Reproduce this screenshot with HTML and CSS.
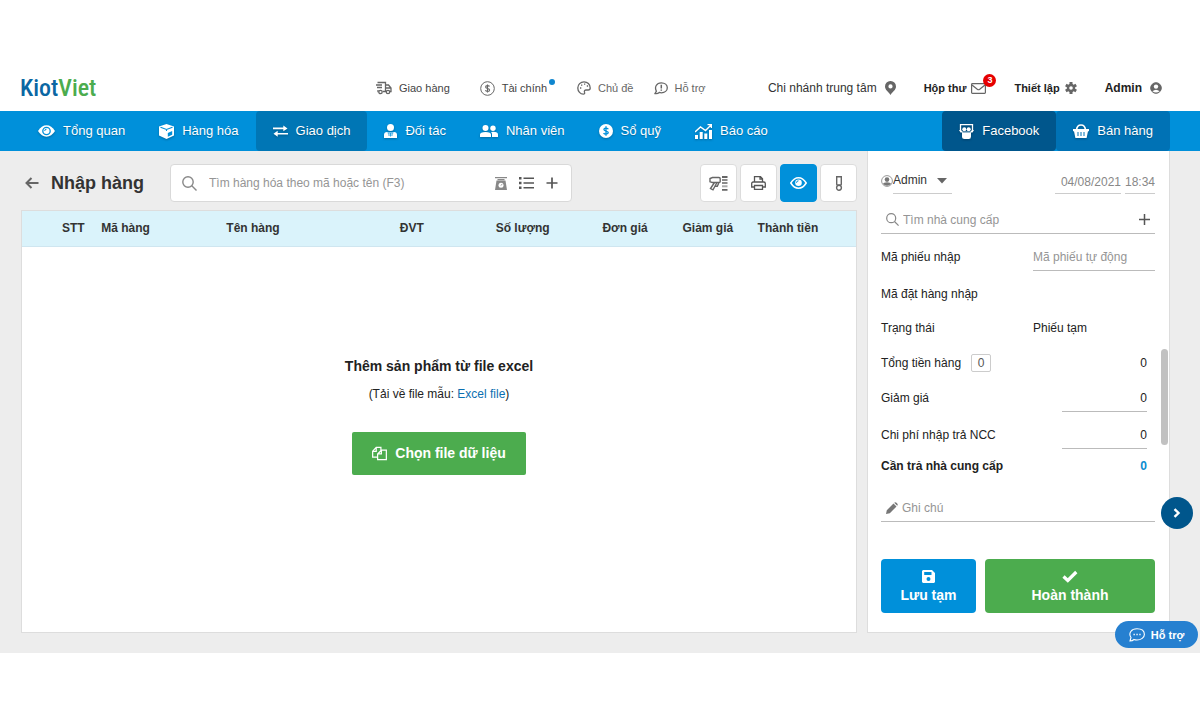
FILE: index.html
```html
<!DOCTYPE html>
<html lang="vi">
<head>
<meta charset="utf-8">
<meta name="viewport" content="width=device-width, initial-scale=1">
<title>KiotViet - Nhập hàng</title>
<link rel="stylesheet" href="styles.css">
</head>
<body>
<header class="topbar">
  <a class="logo" href="#"><span class="logo-kiot">Kiot</span><span class="logo-viet">Viet</span></a>
  <nav class="top-links">
    <a class="top-link strong" href="#"><svg width="16" height="14" viewBox="0 0 16 14" fill="none" stroke="#666" stroke-width="1.3"><path d="M1.500 1.500h8v9H7M9.500 4h3l2.500 3v3.500h-1M0 4h6M1 6.500h5M2 9v1.500h.5M9.500 10.500h1M10 7h5"/><circle cx="4.500" cy="11" r="1.700"/><circle cx="12" cy="11" r="1.700"/></svg>Giao hàng</a>
    <a class="top-link strong finance" href="#"><svg width="15" height="15" viewBox="0 0 15 15" fill="none" stroke="#666"><circle cx="7.500" cy="7.500" r="6.800"/><path d="M9.500 5.500C9 4.300 5.600 4.200 5.600 6c0 1.900 4 1 4 3 0 1.900-3.600 1.800-4.200.3M7.500 3.400v8.200" stroke-width="1.100"/></svg>Tài chính<i class="dot"></i></a>
    <a class="top-link theme" href="#"><svg width="14" height="14" viewBox="0 0 14 14" fill="none" stroke="currentColor" stroke-width="1.300"><path d="M7 .8C3.500.800.800 3.500.800 7s2.700 6.200 5.400 6.200c1.600 0 1.700-1 1.300-1.900C7 10 7.800 9 9 9h2.200c1.300 0 2-.8 2-2C13.200 3.300 10.500.800 7 .800z"/><path d="M3 7h1.300M4 4.200h1.300M7 3.200h1.300M9.800 5h1.300"/></svg>Chủ đề</a>
    <a class="top-link help" href="#"><svg width="14" height="13" viewBox="0 0 14 13" fill="none" stroke="currentColor" stroke-width="1.300"><path d="M1 11.500l1.400-2.300C.2 5.200 2.500.800 7.300.800c3.500 0 6 2.200 6 5s-2.500 5-6 5q-1 0-2-.4Q3.500 12 1 11.500z"/><path d="M7.300 2.800v3.600M7.300 7.500v1.300" stroke-width="1.500"/></svg>Hỗ trợ</a>
  </nav>
  <nav class="account-links">
    <a class="account-link branch" href="#">Chi nhánh trung tâm<svg width="11" height="14" viewBox="0 0 11 14" fill="#666"><path fill-rule="evenodd" d="M5.500 0A5.400 5.400 0 0 0 0 5.400C0 9 3.500 10.500 5.500 14 7.500 10.500 11 9 11 5.400A5.400 5.400 0 0 0 5.500 0zm0 3.300a2.100 2.100 0 1 1 0 4.200 2.100 2.100 0 0 1 0-4.200z"/></svg></a>
    <a class="account-link small inbox" href="#">Hộp thư<span class="mail"><svg width="15" height="11" viewBox="0 0 15 11" fill="none" stroke="#666" stroke-width="1.200"><rect x=".6" y=".6" width="13.800" height="9.800" rx=".8"/><path d="M1 2l5.300 4.300q1.200.9 2.400 0L14 2"/></svg><b class="badge">3</b></span></a>
    <a class="account-link small" href="#">Thiết lập<svg width="12" height="12" viewBox="0 0 12 12"><g stroke="#666" stroke-width="3"><path d="M6 0v12M.8 3l10.400 6M11.200 3L.800 9"/></g><circle cx="6" cy="6" r="4.200" fill="#666"/><circle cx="6" cy="6" r="1.800" fill="#fff"/></svg></a>
    <a class="account-link" href="#">Admin<svg width="12" height="12" viewBox="0 0 12 12"><circle cx="6" cy="6" r="5.300" fill="#666" stroke="#666"/><circle cx="6" cy="4.600" r="2.200" fill="#fff"/><path d="M2.400 9.200Q6 6.200 9.600 9.200 6 12 2.400 9.200z" fill="#fff"/></svg></a>
  </nav>
</header>

<nav class="mainnav">
  <a class="nav-item" href="#"><svg width="17" height="12" viewBox="0 0 17 12"><path d="M0 6Q3.500.300 8.500.300T17 6Q13.500 11.700 8.500 11.700T0 6z" fill="#fff"/><circle cx="8.500" cy="6" r="3.700" fill="none" stroke="#0090da" stroke-width="1.300"/><path d="M6.700 6a1.800 1.800 0 0 1 1.800-1.800" stroke="#0090da" fill="none"/></svg>Tổng quan</a>
  <a class="nav-item" href="#"><svg width="15" height="15" viewBox="0 0 15 15"><path d="M7.500 0L15 2.500v9L7.500 15 0 11.500v-9z" fill="#fff"/><path d="M1.500 3.300L7.500 5.500l6-2.200M7.500 5.500V7" stroke="#0090da" fill="none" stroke-width="1.100"/><path d="M8.800 9l4.400-2v3.800l-4.400 2z" fill="#0090da"/></svg>Hàng hóa</a>
  <a class="nav-item active" href="#"><svg width="15" height="12" viewBox="0 0 16 12"><path d="M0 2.300h11V0l4.500 3.200L11 6.300V4H0zM16 8H5V5.700L.5 8.900 5 12V9.700h11z" fill="#fff"/></svg>Giao dịch</a>
  <a class="nav-item" href="#"><svg width="13" height="14" viewBox="0 0 13 14"><circle cx="6.500" cy="3.500" r="3.500" fill="#fff"/><path d="M0 14v-3q0-3 3-3h7q3 0 3 3v3z" fill="#fff"/><path d="M3.500 8.800h6M6.500 9v3.500M4.800 9l.3 3M8.200 9l-.3 3" stroke="#0090da" stroke-width=".8"/></svg>Đối tác</a>
  <a class="nav-item" href="#"><svg width="18" height="12" viewBox="0 0 18 12" fill="#fff"><circle cx="5.500" cy="3" r="3"/><circle cx="13" cy="3.200" r="2.700"/><path d="M0 12V9.500Q0 7 5.500 7T11 9.500V12zM12 12V9q0-1.200-1-2Q18 6.300 18 9.500V12z"/></svg>Nhân viên</a>
  <a class="nav-item" href="#"><svg width="14" height="14" viewBox="0 0 14 14"><circle cx="7" cy="7" r="7" fill="#fff"/><path d="M9.300 5.200C8.700 3.600 4.900 3.700 4.900 5.500c0 2 4.400 1.100 4.400 3.100 0 1.900-4 1.900-4.700.3M7 2.300v9.400" stroke="#0090da" stroke-width="1.300" fill="none"/></svg>Sổ quỹ</a>
  <a class="nav-item" href="#"><svg width="17" height="15" viewBox="0 0 17 15"><path d="M0 11h3v4H0zM4.700 8h3v7h-3zM9.300 9.500h3V15h-3zM14 6h3v9h-3z" fill="#fff"/><path d="M0 8l5.500-5 5 3.500L16 1M12.500.600H16.400V4" fill="none" stroke="#fff" stroke-width="1.400"/></svg>Báo cáo</a>
  <div class="nav-actions">
    <a class="nav-item facebook" href="#"><svg width="15" height="15" viewBox="0 0 15 15"><path d="M1.500 6V.7h12V6" fill="none" stroke="#fff" stroke-width="1.300"/><path d="M0 6h2l1.500 1.500h8L13 6h2l-1.500 2.500H12v4Q12 15 9.800 15H5.500Q3 15 3 12.500v-4H1.500z" fill="#fff"/><circle cx="5.300" cy="5.200" r="2" fill="#fff"/><circle cx="9.700" cy="5.200" r="2" fill="#fff"/><path d="M3.500 8h8" stroke="#00568c" stroke-width=".8"/></svg>Facebook</a>
    <a class="nav-item sell" href="#"><svg width="16" height="14" viewBox="0 0 16 14"><path d="M3.500 6Q4 1 8 1t4.500 5" fill="none" stroke="#fff" stroke-width="1.700"/><path d="M0 5h16v2.200h-1L13.600 14H2.400L1 7.200H0z" fill="#fff"/><path d="M5 8v4M8 8v4M11 8v4" stroke="#0072b5"/></svg>Bán hàng</a>
  </div>
</nav>

<main class="workspace">
  <section class="purchase">
    <div class="toolbar">
      <a class="back" href="#" aria-label="Quay lại"><svg width="14" height="12" viewBox="0 0 14 12" fill="none" stroke="#666" stroke-width="2"><path d="M13.500 6H2M6.500 1l-5 5 5 5"/></svg></a>
      <h1 class="title">Nhập hàng</h1>
      <div class="search">
        <svg width="15" height="15" viewBox="0 0 15 15" fill="none" stroke="#888" stroke-width="1.400"><circle cx="6" cy="6" r="5.200"/><path d="M9.800 9.800l4.700 4.700"/></svg>
        <input class="search-input" type="text" aria-label="Tìm hàng hóa" placeholder="Tìm hàng hóa theo mã hoặc tên (F3)">
        <button class="icon-btn" type="button" aria-label="Cân"><svg width="12" height="13" viewBox="0 0 12 13"><path d="M0 .7h12M2.500 2.700h7" stroke="#888" stroke-width="1.300"/><path d="M1.500 3.500h9L12 13H0z" fill="#888"/><circle cx="6" cy="8.300" r="2.500" fill="#fff"/><path d="M6 8.500l1-1.300" stroke="#888"/></svg></button>
        <button class="icon-btn" type="button" aria-label="Danh sách"><svg width="15" height="12" viewBox="0 0 15 12" stroke="#555" stroke-width="1.600"><path d="M4.500 1.200H15M4.500 6H15M4.500 10.800H15"/><path d="M0 1.200h2.500M0 6h2.500M0 10.800h2.500" stroke-width="2.400"/></svg></button>
        <button class="icon-btn" type="button" aria-label="Thêm"><svg width="12" height="12" viewBox="0 0 12 12" stroke="#555" stroke-width="1.700"><path d="M6 .5v11M.5 6h11"/></svg></button>
      </div>
      <div class="tools">
        <button class="tool" type="button" aria-label="Quét mã vạch"><svg width="19" height="15" viewBox="0 0 19 15" fill="none" stroke="#666" stroke-width="1.400"><path d="M3.500 1.500H10q1.200 0 1.200 1.200v2.800q0 1-1.200 1H3.500L1 5.800V2.500zM5.500 6.500L1.500 12.500l2.500 1.300L8 6.500M6.500 10.300h1.800l1.700-3.800"/><path d="M13 1h5.500M13 13.800h5.500" stroke-width="1.800"/><path d="M13 4h5.500M13 7h5.500" stroke-width="1.500"/><path d="M13 10.300h5.500" stroke="#aaa" stroke-width="2"/></svg></button>
        <button class="tool" type="button" aria-label="In"><svg width="15" height="14" viewBox="0 0 15 14" fill="none" stroke="#555" stroke-width="1.300"><path d="M3.500 6V.7h6l2 2V6M3.500 11H.7V7.500Q.7 6 2.200 6h10.600q1.500 0 1.500 1.500V11h-2.800M3.500 9.500h8v3.800h-8zM9 1v2.200h2.500"/></svg></button>
        <button class="tool on" type="button" aria-label="Hiển thị"><svg width="17" height="12" viewBox="0 0 17 12" fill="none" stroke="#fff" stroke-width="1.500"><path d="M.8 6Q4 .8 8.500.800T16.200 6Q13 11.200 8.500 11.200T.8 6z"/><circle cx="8.500" cy="5.700" r="3.300" fill="#fff" stroke="none"/><path d="M6.500 5.800a2 2 0 0 1 2-2" stroke="#0090da" stroke-width="1"/></svg></button>
        <button class="tool" type="button" aria-label="Ghi chú"><svg width="8" height="15" viewBox="0 0 8 15" fill="none" stroke="#666" stroke-width="1.400"><path d="M1.700.8h4.600v7.400q0 .8-.8.800h-3q-.8 0-.8-.8z"/><circle cx="4" cy="11.800" r="2.400"/></svg></button>
      </div>
    </div>
    <div class="sheet">
      <table class="items">
        <colgroup><col class="c-no"><col class="c-code"><col class="c-name"><col class="c-unit"><col class="c-qty"><col class="c-price"><col class="c-disc"><col class="c-total"></colgroup>
        <thead><tr><th class="first">STT</th><th>Mã hàng</th><th>Tên hàng</th><th>ĐVT</th><th>Số lượng</th><th>Đơn giá</th><th>Giảm giá</th><th>Thành tiền</th></tr></thead>
      </table>
      <div class="empty">
        <h2 class="empty-title">Thêm sản phẩm từ file excel</h2>
        <p class="empty-note">(Tải về file mẫu: <a class="file-link" href="#">Excel file</a>)</p>
        <button class="choose" type="button"><svg width="15" height="15" viewBox="0 0 16 15" fill="none" stroke="#fff" stroke-width="1.300"><path d="M6 11.400H.7V5L4.500.900h5V4M4.500 1v4.200H.700M10 4h5.300v10H6V8zM10 4v4H6"/></svg>Chọn file dữ liệu</button>
      </div>
    </div>
  </section>

  <aside class="panel">
    <div class="meta">
      <label class="person"><svg width="12" height="12" viewBox="0 0 12 12"><circle cx="6" cy="6" r="5.400" fill="none" stroke="#999"/><circle cx="6" cy="4.600" r="2.300" fill="#777"/><path d="M2 9Q2.500 7.200 6 7.200T10 9Q6 12.500 2 9z" fill="#777"/></svg>
        <span class="picker"><select class="picker-select" aria-label="Người nhập"><option>Admin</option></select><svg class="caret" width="10" height="6" viewBox="0 0 10 6"><path d="M0 0h10L5 5.500z" fill="#666"/></svg></span></label>
      <div class="when"><input class="date" type="text" aria-label="Ngày nhập" value="04/08/2021"><input class="time" type="text" aria-label="Giờ nhập" value="18:34"></div>
    </div>
    <div class="line supplier">
      <svg width="13" height="13" viewBox="0 0 15 15" fill="none" stroke="#888" stroke-width="1.400"><circle cx="6" cy="6" r="5.200"/><path d="M9.800 9.800l4.700 4.700"/></svg>
      <input class="line-input" type="text" aria-label="Nhà cung cấp" placeholder="Tìm nhà cung cấp">
      <button class="icon-btn add" type="button" aria-label="Thêm nhà cung cấp"><svg width="11" height="11" viewBox="0 0 11 11" stroke="#555" stroke-width="1.500"><path d="M5.500 0v11M0 5.500h11"/></svg></button>
    </div>
    <div class="row code"><label for="code">Mã phiếu nhập</label><input id="code" class="field code-field" type="text" placeholder="Mã phiếu tự động"></div>
    <div class="row order"><span>Mã đặt hàng nhập</span></div>
    <div class="row status"><span>Trạng thái</span><span class="state">Phiếu tạm</span></div>
    <div class="row"><span>Tổng tiền hàng<span class="count">0</span></span><span class="amount">0</span></div>
    <div class="row"><label for="discount">Giảm giá</label><input id="discount" class="field money" type="text" value="0"></div>
    <div class="row cost"><label for="cost">Chi phí nhập trả NCC</label><input id="cost" class="field money" type="text" value="0"></div>
    <div class="row due"><span>Cần trả nhà cung cấp</span><span class="amount">0</span></div>
    <div class="line note">
      <svg width="12" height="12" viewBox="0 0 12 12" fill="#777"><path d="M0 12l.8-3.800L7.500 1.500l3 3L3.800 11.200zM8.200.800q1-1 2.300 0l.7.700q1 1.200 0 2.300z"/></svg>
      <input class="line-input" type="text" aria-label="Ghi chú" placeholder="Ghi chú">
    </div>
    <div class="actions">
      <button class="action draft" type="button"><svg width="13" height="13" viewBox="0 0 13 13"><path fill-rule="evenodd" d="M1 0h9l3 3v9l-1 1H1l-1-1V1zM2.200 2v3h7.300V2zM6.500 7a2 2 0 1 0 0 4 2 2 0 0 0 0-4z" fill="#fff"/></svg>Lưu tạm</button>
      <button class="action done" type="button"><svg width="16" height="13" viewBox="0 0 16 13"><path d="M1.500 6.500l4.300 4L14.300 2" fill="none" stroke="#fff" stroke-width="3.200"/></svg>Hoàn thành</button>
    </div>
    <i class="thumb"></i>
    <button class="expand" type="button" aria-label="Mở rộng"><svg width="8" height="10" viewBox="0 0 8 10"><path d="M1.500 1.200L5.500 5l-4 3.800" fill="none" stroke="#fff" stroke-width="2.400"/></svg></button>
  </aside>
  <button class="chat" type="button"><svg width="16" height="14" viewBox="0 0 16 14" fill="none" stroke="#fff" stroke-width="1.100"><path d="M1 13l1-3.500C-1 5 2.500.800 8 .800S15.400 3.500 15.400 6.500 12 12 8 12q-1.600 0-3-.5Q3.500 13 1 13z"/><path d="M4.500 6.500h1.300M7.400 6.500h1.300M10.300 6.500h1.300" stroke-width="1.500"/></svg>Hỗ trợ</button>
</main>
</body>
</html>
```

FILE: styles.css
```css
* { box-sizing: border-box; }
body {
  margin: 0;
  padding-top: 65px;
  background: #fff;
  color: #222;
  font: 12px/16px "Liberation Sans", Arial, sans-serif;
}
a { color: inherit; text-decoration: none; }
svg { display: block; flex: none; }
button, input, select { font: inherit; color: inherit; margin: 0; padding: 0; border: 0; border-radius: 0; background: none; }
button { cursor: pointer; }
input { min-width: 0; outline: 0; }
input::placeholder { color: #959595; opacity: 1; }

/* Top bar */
.topbar { display: flex; align-items: center; min-height: 46px; padding: 0 38px 0 20px; }
.logo { flex: 0 0 356px; font: 500 24px/28px "Roboto Condensed", "Liberation Sans Narrow", Roboto, sans-serif; }
.logo-kiot { color: #0b67a3; }
.logo-viet { color: #4cac4e; }
.top-links { display: flex; align-items: center; color: #666; font-size: 11px; }
.top-link { position: relative; display: flex; align-items: center; gap: 7px; }
.top-link.strong { color: #444; }
.finance, .theme { margin-left: 30px; }
.help { margin-left: 20px; }
.dot { position: absolute; top: -1px; right: -8px; width: 6px; height: 6px; border-radius: 50%; background: #0f86cf; }
.account-links { display: flex; align-items: center; gap: 28px; margin-left: auto; font-weight: bold; white-space: nowrap; }
.account-link { display: flex; align-items: center; gap: 8px; }
.account-link.small { gap: 5px; font-size: 11px; }
.account-link.branch { font-weight: normal; color: #333; }
.mail { position: relative; }
.badge {
  position: absolute; top: -9px; right: -10px;
  width: 13px; height: 13px; border-radius: 50%;
  background: #e60000; color: #fff; font-size: 9px; line-height: 13px; text-align: center;
}

/* Main navigation */
.mainnav { display: flex; min-height: 40px; padding: 0 30px 0 21px; background: #0090da; color: #fff; font-size: 13px; white-space: nowrap; }
.nav-item { display: flex; align-items: center; gap: 8px; padding: 0 17px; border-radius: 4px; text-shadow: 0 1px 1px rgba(0, 0, 0, .25); }
.nav-item svg { filter: drop-shadow(0 1px 1px rgba(0, 0, 0, .25)); }
.nav-item.active { background: #0076b5; }
.nav-actions { display: flex; margin-left: auto; }
.facebook { background: #00568c; }
.sell { background: #0072b5; }

/* Workspace */
.workspace { position: relative; display: flex; gap: 10px; padding: 0 30px 20px 21px; background: #ededed; }
.purchase { display: flex; flex: 1; flex-direction: column; min-width: 0; }
.toolbar { display: flex; align-items: center; padding: 13px 0 8px 4px; }
.back { flex: none; margin-right: 12px; }
.title { flex: 0 0 119px; margin: 0; color: #333; font-size: 18px; line-height: 24px; white-space: nowrap; }
.search {
  display: flex; flex: 0 1 402px; align-items: center; gap: 12px;
  height: 38px; padding: 0 13px 0 11px;
  border: 1px solid #d9d9d9; border-radius: 4px; background: #fff;
}
.search-input { flex: 1; }
.icon-btn { flex: none; }
.tools { display: flex; gap: 3px; margin-left: auto; }
.tool {
  display: flex; align-items: center; justify-content: center;
  width: 37px; height: 38px; border: 1px solid #dcdcdc; border-radius: 4px; background: #fff;
}
.tool.on { border-color: #0090da; background: #0090da; }

.sheet { flex: 1; border: 1px solid #ddd; background: #fff; }
.items { width: 100%; border-collapse: collapse; table-layout: fixed; }
.items th { height: 35px; padding: 0; border-bottom: 1px solid #cfe6f0; background: #daf3fb; color: #333; text-align: left; white-space: nowrap; }
.items .first { padding-left: 40px; }
.c-no { width: 9.5%; }
.c-code { width: 15%; }
.c-name { width: 20.8%; }
.c-unit { width: 11.5%; }
.c-qty { width: 12.8%; }
.c-price { width: 9.6%; }
.c-disc { width: 9%; }
.c-total { width: 11.8%; }
.empty { display: flex; flex-direction: column; align-items: center; padding: 109px 0 40px; }
.empty-title { margin: 0; font-size: 14px; line-height: 20px; }
.empty-note { margin: 10px 0 30px; }
.file-link { color: #0b6fb0; }
.choose {
  display: flex; align-items: center; gap: 8px; height: 43px; padding: 0 20px;
  border-radius: 2px; background: #4cac4e; color: #fff; font-size: 14px; font-weight: bold;
}

/* Order panel */
.panel {
  position: relative; flex: 0 0 303px; padding: 16px 14px 19px 13px;
  border: solid #ddd; border-width: 0 1px 1px; background: #fff;
}
.meta { display: flex; align-items: flex-end; justify-content: space-between; }
.person { display: flex; align-items: center; }
.picker { position: relative; }
.picker-select { display: block; width: 59px; height: 27px; border-bottom: 1px solid #ccc; appearance: none; color: #333; }
.caret { position: absolute; top: 11px; right: 5px; pointer-events: none; }
.when { display: flex; gap: 4px; color: #888; }
.date, .time { height: 24px; border-bottom: 1px solid #ccc; text-align: right; }
.date { width: 66px; }
.time { width: 30px; }
.line { display: flex; align-items: center; gap: 4px; height: 28px; padding-left: 5px; border-bottom: 1px solid #bbb; }
.supplier { margin-top: 12px; }
.line-input { flex: 1; }
.add { padding: 4px 5px; }
.row { display: flex; align-items: center; justify-content: space-between; min-height: 28px; margin-top: 7px; }
.row.code, .row.order, .row.cost { margin-top: 9px; }
.row.status { margin-top: 6px; }
.field { height: 28px; border-bottom: 1px solid #bbb; }
.code-field, .state { width: 122px; }
.count { display: inline-block; min-width: 20px; margin-left: 10px; border: 1px solid #ccc; border-radius: 2px; color: #555; text-align: center; }
.amount { margin-right: 8px; }
.money { width: 85px; margin-right: 8px; text-align: right; }
.row.due { margin-top: 3px; font-weight: bold; }
.due .amount { color: #0a8dd0; }
.note { margin-top: 14px; }
.actions { display: flex; gap: 9px; margin-top: 37px; }
.action {
  display: flex; flex-direction: column; align-items: center; justify-content: center; gap: 4px;
  height: 54px; border-radius: 4px; color: #fff; font-size: 14px; font-weight: bold;
}
.draft { flex: 0 0 95px; background: #0090da; }
.done { flex: 1; background: #4cac4e; }

/* Elements floating over the panel */
.thumb { position: absolute; top: 198px; right: 1px; width: 7px; height: 96px; border-radius: 4px; background: #c1c1c1; }
.expand {
  position: absolute; top: 346px; right: -24px;
  display: flex; align-items: center; justify-content: center;
  width: 32px; height: 32px; border-radius: 50%; background: #00568c;
}
.chat {
  position: absolute; right: 2px; bottom: 5px;
  display: flex; align-items: center; justify-content: center; gap: 6px;
  width: 83px; height: 27px; border-radius: 14px; background: #2680d0; color: #fff; font-size: 11px; font-weight: bold;
}
```
